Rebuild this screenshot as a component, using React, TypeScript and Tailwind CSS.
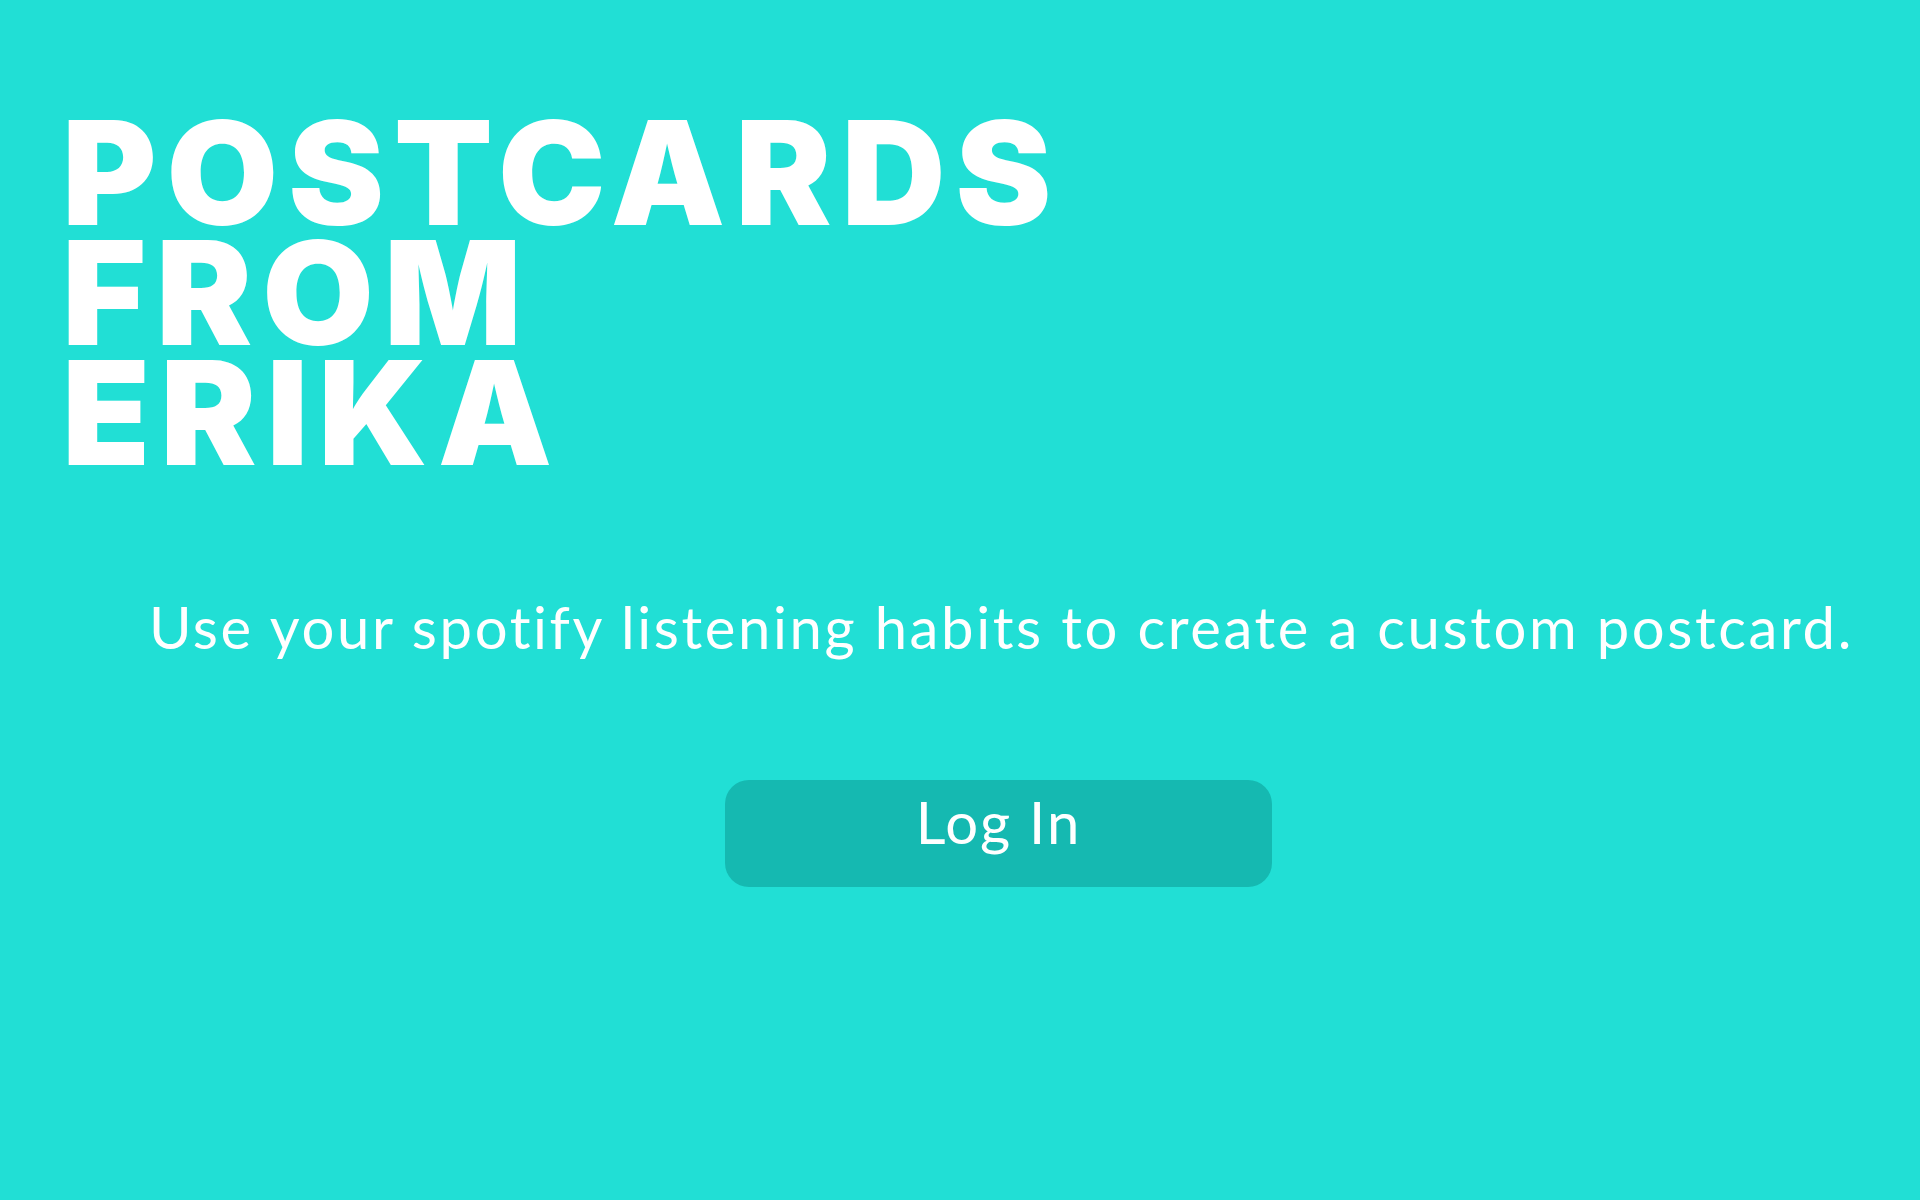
export default function App() {
  return (
    <div className="min-h-[1200px] w-full bg-[#21dfd5] overflow-hidden">
      <div className="flex flex-col pt-[113px]">
        <h1
          className="pl-[62px] text-white font-black text-[144px] leading-[120px] tracking-[10px]"
          style={{ fontFamily: "Inter, 'Liberation Sans', sans-serif" }}
        >
          <div>POSTCARDS</div>
          <div>FROM</div>
          <div>ERIKA</div>
        </h1>
        <p
          className="mt-[119px] pl-[149px] text-white font-normal text-[58px] leading-[1.2] tracking-[2.6px] whitespace-nowrap"
          style={{ fontFamily: "Lato, 'Liberation Sans', sans-serif" }}
        >
          Use your spotify listening habits to create a custom postcard.
        </p>
        <div className="mt-[118px] pl-[725px]">
          <button
            className="w-[547px] h-[107px] rounded-3xl bg-[#15b9b1] text-white text-[58px] leading-[1.2] pb-[22px] tracking-[2px]"
            style={{ fontFamily: "Lato, 'Liberation Sans', sans-serif" }}
          >
            Log In
          </button>
        </div>
      </div>
    </div>
  );
}
